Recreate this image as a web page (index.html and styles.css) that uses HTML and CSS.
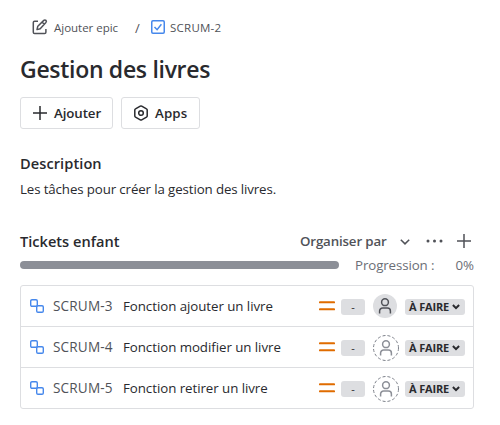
FILE: index.html
```html
<!DOCTYPE html>
<html lang="fr">
<head>
<meta charset="utf-8">
<title>Gestion des livres</title>
<link rel="stylesheet" href="styles.css">
</head>
<body>
<svg class="defs" width="0" height="0">
  <symbol id="plus" viewBox="0 0 14 14"><path d="M7 0v14M0 7h14" fill="none" stroke="currentColor" stroke-width="1.5"/></symbol>
  <symbol id="subtask" viewBox="0 0 14 14"><g fill="none" stroke="#4688ec" stroke-width="1.4"><rect x=".7" y=".7" width="6.6" height="6.6" rx="1.3"/><rect x="6.7" y="6.7" width="6.6" height="6.6" rx="1.3"/></g></symbol>
  <symbol id="priority" viewBox="0 0 16 12"><path d="M.8 2.3h14.4M.8 9.3h14.4" stroke="#e06c00" stroke-width="1.9" stroke-linecap="round"/></symbol>
  <symbol id="person" viewBox="0 0 14 16"><g fill="none" stroke="currentColor" stroke-width="1.5"><circle cx="7" cy="4.2" r="3.4"/><path d="M1.6 15.5V13a3 3 0 0 1 3-3h4.8a3 3 0 0 1 3 3v2.5"/></g></symbol>
  <symbol id="chevron" viewBox="0 0 10 6"><path d="M.8.8 5 4.9 9.2.8" fill="none" stroke="currentColor" stroke-width="1.5"/></symbol>
  <symbol id="chevron-bold" viewBox="0 0 8 6"><path d="M.9 1 4 4.1 7.1 1" fill="none" stroke="currentColor" stroke-width="2"/></symbol>
</svg>
<main class="issue">
  <nav class="crumbs">
    <svg class="edit" width="16" height="16" viewBox="0 0 16 16"><g fill="none" stroke="#505258" stroke-width="1.5" stroke-linejoin="round"><path d="M6 2.3H2.6c-.8 0-1.3.5-1.3 1.3v9.6c0 .8.5 1.3 1.3 1.3h10c.8 0 1.3-.5 1.3-1.3V10"/><path d="m5 10.6.8-3.4 6-5.8c.7-.7 1.5-.6 2.1 0s.6 1.4 0 2.1L8.2 9.7zM10.2 3.2l2.1 2.1"/></g></svg>
    <span class="epic">Ajouter epic</span>
    <span class="slash">/</span>
    <svg class="task" width="14" height="14" viewBox="0 0 14 14"><g fill="none" stroke="#4688ec" stroke-width="1.5"><rect x=".75" y=".75" width="12.5" height="12.5" rx="1.2"/><path d="m3.5 7 2.6 2.7 4.3-5.5"/></g></svg>
    <span class="key-link">SCRUM-2</span>
  </nav>
  <h1>Gestion des livres</h1>
  <div class="actions">
    <button class="add"><svg width="14" height="14"><use href="#plus"/></svg><span>Ajouter</span></button>
    <button class="apps"><svg width="14" height="16" viewBox="0 0 14 16"><g fill="none" stroke="#292a2e" stroke-width="1.5"><path d="M6.3 1.1a1.4 1.4 0 0 1 1.4 0l4.8 2.7c.4.2.7.7.7 1.2v6c0 .5-.3 1-.7 1.2l-4.8 2.7a1.4 1.4 0 0 1-1.4 0l-4.8-2.7C1.1 12 .8 11.5.8 11V5c0-.5.3-1 .7-1.2z"/><circle cx="7" cy="8" r="2.3"/></g></svg><span>Apps</span></button>
  </div>
  <h2 class="description-title">Description</h2>
  <p class="description">Les tâches pour créer la gestion des livres.</p>
  <header class="children-head">
    <h2>Tickets enfant</h2>
    <div class="tools">
      <span class="sort">Organiser par</span>
      <svg class="sort-arrow" width="10" height="6"><use href="#chevron"/></svg>
      <svg class="more" width="17" height="4" viewBox="0 0 17 4"><g fill="#505258"><circle cx="2" cy="2" r="1.5"/><circle cx="8.5" cy="2" r="1.5"/><circle cx="15" cy="2" r="1.5"/></g></svg>
      <svg width="14" height="14"><use href="#plus"/></svg>
    </div>
  </header>
  <div class="progress">
    <div class="bar"></div>
    <span class="label">Progression :</span>
    <span class="percent">0%</span>
  </div>
  <ul class="tickets">
    <li>
      <svg width="14" height="14"><use href="#subtask"/></svg>
      <span class="key">SCRUM-3</span><span class="name">Fonction ajouter un livre</span>
      <svg class="priority" width="16" height="12"><use href="#priority"/></svg>
      <span class="estimate">-</span>
      <span class="avatar filled"><svg width="14" height="16"><use href="#person"/></svg></span>
      <span class="status"><span>À FAIRE</span><svg width="8" height="6"><use href="#chevron-bold"/></svg></span>
    </li>
    <li>
      <svg width="14" height="14"><use href="#subtask"/></svg>
      <span class="key">SCRUM-4</span><span class="name">Fonction modifier un livre</span>
      <svg class="priority" width="16" height="12"><use href="#priority"/></svg>
      <span class="estimate">-</span>
      <span class="avatar"><svg class="ring" width="26" height="26" viewBox="0 0 26 26"><circle cx="13" cy="13" r="12.5" fill="none" stroke="#7d818a" stroke-dasharray="3 2"/></svg><svg width="14" height="16"><use href="#person"/></svg></span>
      <span class="status"><span>À FAIRE</span><svg width="8" height="6"><use href="#chevron-bold"/></svg></span>
    </li>
    <li>
      <svg width="14" height="14"><use href="#subtask"/></svg>
      <span class="key">SCRUM-5</span><span class="name">Fonction retirer un livre</span>
      <svg class="priority" width="16" height="12"><use href="#priority"/></svg>
      <span class="estimate">-</span>
      <span class="avatar"><svg class="ring" width="26" height="26" viewBox="0 0 26 26"><circle cx="13" cy="13" r="12.5" fill="none" stroke="#7d818a" stroke-dasharray="3 2"/></svg><svg width="14" height="16"><use href="#person"/></svg></span>
      <span class="status"><span>À FAIRE</span><svg width="8" height="6"><use href="#chevron-bold"/></svg></span>
    </li>
  </ul>
</main>
</body>
</html>
```
FILE: styles.css
```css
* { box-sizing: border-box; }
body {
  margin: 0;
  background: #fff;
  color: #292a2e;
  font: 13.3px/20px "Open Sans", "Noto Sans", sans-serif;
}
h1, h2, p, ul { margin: 0; padding: 0; }
svg { display: block; flex: none; }
span { white-space: nowrap; }
.defs { position: absolute; }
.issue { width: 474px; padding: 17px 0 0 20px; }
.crumbs {
  display: flex;
  align-items: center;
  height: 20px;
  padding-left: 12px;
  color: #505258;
  font-size: 11.5px;
}
.crumbs span { padding-top: 1px; }
.epic { width: 81px; margin-left: 6px; letter-spacing: -0.02px; }
.slash { width: 16px; font-size: 13px; }
.key-link { margin-left: 5px; letter-spacing: 0.25px; }
h1 {
  height: 28px;
  margin-top: 18px;
  font-size: 23px;
  font-weight: 600;
  line-height: 28px;
  letter-spacing: -0.3px;
}
.actions { display: flex; gap: 8px; margin-top: 14px; }
button {
  display: flex;
  align-items: center;
  height: 32px;
  padding: 0 0 0 12px;
  border: 1px solid #dddee1;
  border-radius: 3px;
  background: #fff;
  color: #292a2e;
  font: 600 13.3px/20px "Open Sans", "Noto Sans", sans-serif;
  letter-spacing: -0.1px;
}
.add { width: 93px; }
.add span { margin-left: 7px; }
.apps { width: 79px; }
.apps span { margin-left: 7px; letter-spacing: 0.1px; }
h2 { font-size: 14.6px; font-weight: 600; line-height: 20px; }
.description-title { margin-top: 24px; letter-spacing: 0.07px; }
.description { margin-top: 6px; letter-spacing: -0.12px; }
.children-head { display: flex; justify-content: space-between; align-items: center; height: 20px; margin-top: 32px; }
.tools { display: flex; align-items: center; padding-right: 3px; color: #505258; }
.sort { width: 89px; font-weight: 600; letter-spacing: -0.15px; }
.sort-arrow { margin: 1px 0 0 11px; }
.more { margin: 0 14px 0 16px; }
.progress { display: flex; align-items: center; height: 20px; margin-top: 4px; color: #6b6e76; }
.bar { width: 319px; height: 8px; border-radius: 4px; background: #8c8f97; }
.label { margin-left: 16px; letter-spacing: -0.1px; }
.percent { margin-left: auto; }
.tickets { margin-top: 10px; border: 1px solid #dddee1; border-radius: 3px; list-style: none; }
.tickets li { display: flex; align-items: center; height: 41px; padding: 0 8px 0 9px; }
.tickets li:first-child { height: 40px; }
.tickets li + li { border-top: 1px solid #dddee1; }
.key { width: 70px; margin-left: 9px; color: #505258; font-size: 13.6px; letter-spacing: 0.15px; }
.name { flex: 1; letter-spacing: -0.05px; }
.priority { margin-right: 6px; }
.estimate { width: 24px; height: 16px; margin-top: 2px; border-radius: 3px; background: #dddee1; font-size: 11px; line-height: 16px; text-align: center; }
.avatar { position: relative; display: grid; place-items: center; width: 26px; height: 26px; margin: 2px 6px 0 8px; color: #8c8f97; }
.avatar.filled { width: 24px; height: 24px; margin: 0 8px; border-radius: 50%; background: #dddee1; color: #505258; }
.ring { position: absolute; inset: 0; }
.status { display: flex; align-items: center; justify-content: space-between; width: 60px; height: 16px; margin-top: 2px; padding: 0 5px 0 4px; border-radius: 3px; background: #dddee1; font-size: 11px; font-weight: 700; line-height: 16px; letter-spacing: -0.15px; }
```
